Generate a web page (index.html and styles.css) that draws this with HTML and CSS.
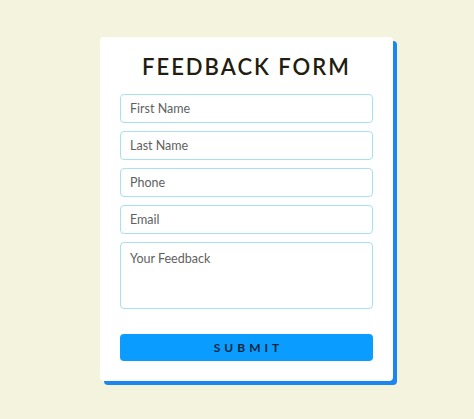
FILE: index.html
```html
<!DOCTYPE html>
<html>
<head>
<meta charset="utf-8">
<link rel="stylesheet" href="styles.css">
</head>
<body>
<div class="page">
  <form class="card">
    <h1 class="title">FEEDBACK FORM</h1>
    <div class="fields">
      <input class="field" type="text" placeholder="First Name">
      <input class="field" type="text" placeholder="Last Name">
      <input class="field" type="text" placeholder="Phone">
      <input class="field" type="text" placeholder="Email">
      <textarea class="field area" placeholder="Your Feedback"></textarea>
    </div>
    <button class="submit" type="button">SUBMIT</button>
  </form>
</div>
</body>
</html>
```
FILE: styles.css
```css
html, body {
  margin: 0;
  padding: 0;
  background: #f4f3de;
  height: 100%;
}
.page {
  padding: 37px 0 0 100px;
}
.card {
  width: 293px;
  height: 344px;
  box-sizing: border-box;
  background: #ffffff;
  border-radius: 4px;
  box-shadow: 4px 4px 0 #1a86f2;
  padding: 17px 20px 20px 20px;
  font-family: Lato, "Noto Sans", sans-serif;
  display: flex;
  flex-direction: column;
}
.title {
  margin: 0 0 14px 0;
  font-size: 22px;
  line-height: 26px;
  font-weight: 600;
  letter-spacing: 2px;
  color: #231d10;
  text-align: center;
}
.fields {
  display: flex;
  flex-direction: column;
  gap: 8px;
}
.field {
  box-sizing: border-box;
  width: 100%;
  height: 29px;
  margin: 0;
  border: 1px solid #a9e0ef;
  border-radius: 4px;
  padding: 0 9px;
  font-family: Lato, "Noto Sans", sans-serif;
  font-size: 12.5px;
  color: #555;
  outline: none;
  background: #fff;
}
.field::placeholder {
  color: #5f5f5f;
}
.area {
  height: 67px;
  padding: 8px 9px;
  resize: none;
}
.submit {
  margin-top: 25px;
  height: 27px;
  border: none;
  border-radius: 4px;
  background: #0a9dff;
  color: #13263a;
  font-family: Lato, "Noto Sans", sans-serif;
  font-size: 12px;
  font-weight: 700;
  letter-spacing: 4px;
  padding: 0 0 0 4px;
}
```
